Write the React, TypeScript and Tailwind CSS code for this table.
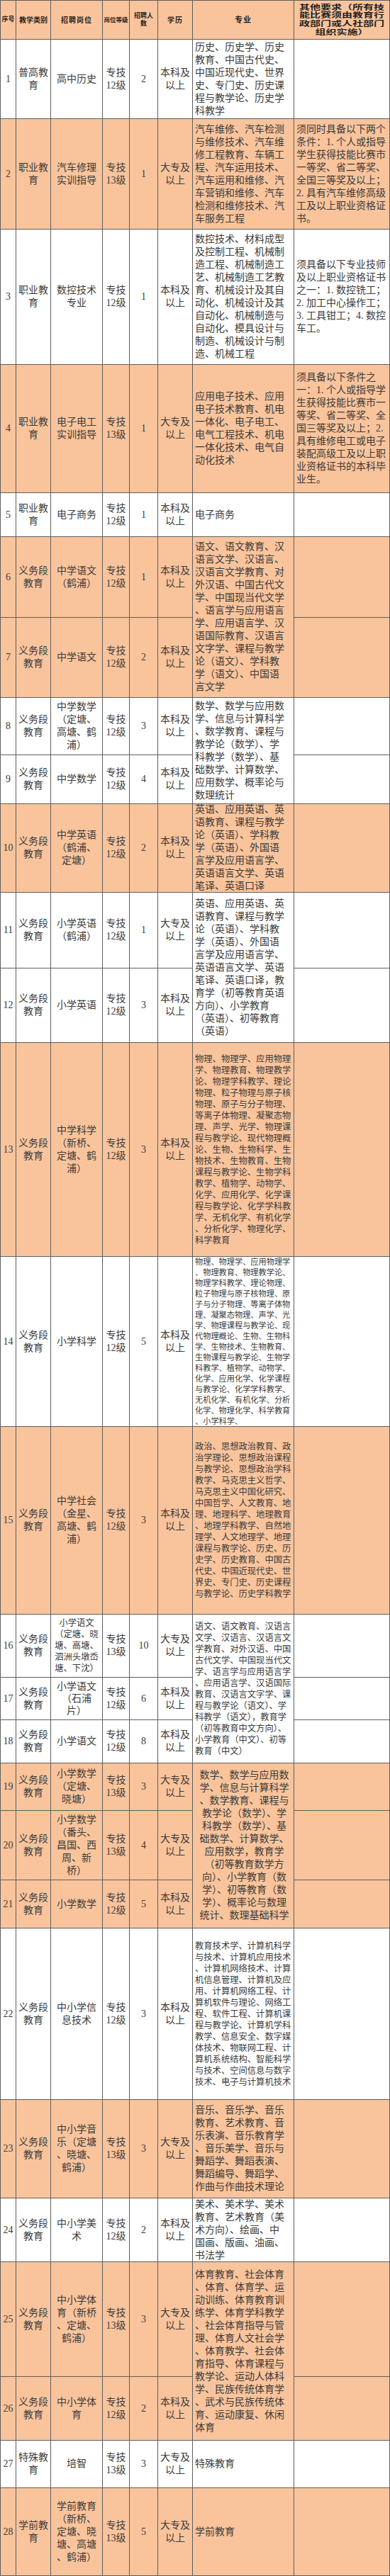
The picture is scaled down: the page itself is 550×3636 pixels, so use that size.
import React from "react";

type Major = { lines: string[]; span?: 2 | 3; size: "lg" | "md" | "sm"; center?: boolean };

type Row = {
  no: string;
  cat: string[];
  pos: string[];
  posSize?: "md" | "tight";
  lvl: string;
  cnt: string;
  edu: string;
  major?: Major;
  other?: string[];
  orange: boolean;
};

const YW = ["义务段", "教育"];

const rows: Row[] = [
  {
    no: "1", cat: ["普高教", "育"], pos: ["高中历史"], lvl: "12级", cnt: "2", edu: "本科及", orange: false,
    major: { size: "lg", lines: ["历史、历史学、历史", "教育、中国古代史、", "中国近现代史、世界", "史、专门史、历史课", "程与教学论、历史学", "科教学"] },
  },
  {
    no: "2", cat: ["职业教", "育"], pos: ["汽车修理", "实训指导"], lvl: "13级", cnt: "1", edu: "大专及", orange: true,
    major: { size: "lg", lines: ["汽车维修、汽车检测", "与维修技术、汽车维", "修工程教育、车辆工", "程、汽车运用技术、", "汽车运用和维修、汽", "车营销和维修、汽车", "检测和维修技术、汽", "车服务工程"] },
    other: ["须同时具备以下两个", "条件：1. 个人或指导", "学生获得技能比赛市", "一等奖、省二等奖、", "全国三等奖及以上；", "2. 具有汽车维修高级", "工及以上职业资格证", "书。"],
  },
  {
    no: "3", cat: ["职业教", "育"], pos: ["数控技术", "专业"], lvl: "12级", cnt: "1", edu: "本科及", orange: false,
    major: { size: "lg", lines: ["数控技术、材料成型", "及控制工程、机械制", "造工程、机械制造工", "艺、机械制造工艺教", "育、机械设计及其自", "动化、机械设计及其", "自动化、机械制造与", "自动化、模具设计与", "制造、机械设计与制", "造、机械工程"] },
    other: ["须具备以下专业技师", "及以上职业资格证书", "之一：1. 数控铣工；", "2. 加工中心操作工；", "3. 工具钳工；4. 数控", "车工。"],
  },
  {
    no: "4", cat: ["职业教", "育"], pos: ["电子电工", "实训指导"], lvl: "13级", cnt: "1", edu: "大专及", orange: true,
    major: { size: "lg", lines: ["应用电子技术、应用", "电子技术教育、机电", "一体化、电子电工、", "电气工程技术、机电", "一体化技术、电气自", "动化技术"] },
    other: ["须具备以下条件之", "一：1. 个人或指导学", "生获得技能比赛市一", "等奖、省二等奖、全", "国三等奖及以上；2.", "具有维修电工或电子", "装配高级工及以上职", "业资格证书的本科毕", "业生。"],
  },
  {
    no: "5", cat: ["职业教", "育"], pos: ["电子商务"], lvl: "12级", cnt: "1", edu: "本科及", orange: false,
    major: { size: "lg", lines: ["电子商务"] },
  },
  {
    no: "6", cat: YW, pos: ["中学语文", "（鹤浦）"], lvl: "12级", cnt: "1", edu: "本科及", orange: true,
    major: { size: "lg", span: 2, lines: ["语文、语文教育、汉", "语言文学、汉语言、", "汉语言文学教育、对", "外汉语、中国古代文", "学、中国现当代文学", "、语言学与应用语言", "学、应用语言学、汉", "语国际教育、汉语言", "文字学、课程与教学", "论（语文）、学科教", "学（语文）、中国语", "言文学"] },
  },
  { no: "7", cat: YW, pos: ["中学语文"], lvl: "12级", cnt: "2", edu: "本科及", orange: true },
  {
    no: "8", cat: YW, pos: ["中学数学", "（定塘、", "高塘、鹤", "浦）"], lvl: "12级", cnt: "3", edu: "本科及", orange: false,
    major: { size: "lg", span: 2, lines: ["数学、数学与应用数", "学、信息与计算科学", "、数学教育、课程与", "教学论（数学）、学", "科教学（数学）、基", "础数学、计算数学、", "应用数学、概率论与", "数理统计"] },
  },
  { no: "9", cat: YW, pos: ["中学数学"], lvl: "12级", cnt: "4", edu: "本科及", orange: false },
  {
    no: "10", cat: YW, pos: ["中学英语", "（鹤浦、", "定塘）"], lvl: "12级", cnt: "2", edu: "本科及", orange: true,
    major: { size: "lg", lines: ["英语、应用英语、英", "语教育、课程与教学", "论（英语）、学科教", "学（英语）、外国语", "言学及应用语言学、", "英语语言文学、英语", "笔译、英语口译"] },
  },
  {
    no: "11", cat: YW, pos: ["小学英语", "（鹤浦）"], lvl: "12级", cnt: "1", edu: "大专及", orange: false,
    major: { size: "lg", span: 2, lines: ["英语、应用英语、英", "语教育、课程与教学", "论（英语）、学科教", "学（英语）、外国语", "言学及应用语言学、", "英语语言文学、英语", "笔译、英语口译，教", "育学（初等教育英语", "方向）、小学教育", "（英语）、初等教育", "（英语）"] },
  },
  { no: "12", cat: YW, pos: ["小学英语"], lvl: "12级", cnt: "3", edu: "本科及", orange: false },
  {
    no: "13", cat: YW, pos: ["中学科学", "（新桥、", "定塘、鹤", "浦）"], lvl: "12级", cnt: "3", edu: "本科及", orange: true,
    major: { size: "md", lines: ["物理、物理学、应用物理", "学、物理教育、物理教学", "论、物理学科教学、理论", "物理、粒子物理与原子核", "物理、原子与分子物理、", "等离子体物理、凝聚态物", "理、声学、光学、物理课", "程与教学论、现代物理概", "论、生物、生物科学、生", "物技术、生物教育、生物", "课程与教学论、生物学科", "教学、植物学、动物学、", "化学、应用化学、化学课", "程与教学论、化学学科教", "学、无机化学、有机化学", "、分析化学、物理化学、", "科学教育"] },
  },
  {
    no: "14", cat: YW, pos: ["小学科学"], lvl: "12级", cnt: "5", edu: "本科及", orange: false,
    major: { size: "sm", lines: ["物理、物理学、应用物理学", "、物理教育、物理教学论、", "物理学科教学、理论物理、", "粒子物理与原子核物理、原", "子与分子物理、等离子体物", "理、凝聚态物理、声学、光", "学、物理课程与教学论、现", "代物理概论、生物、生物科", "学、生物技术、生物教育、", "生物课程与教学论、生物学", "科教学、植物学、动物学、", "化学、应用化学、化学课程", "与教学论、化学学科教学、", "无机化学、有机化学、分析", "化学、物理化学、科学教育", "、小学科学、"] },
  },
  {
    no: "15", cat: YW, pos: ["中学社会", "（金星、", "高塘、鹤", "浦）"], lvl: "12级", cnt: "3", edu: "本科及", orange: true,
    major: { size: "md", lines: ["政治、思想政治教育、政", "治学理论、思想政治课程", "与教学论、思想政治学科", "教学、马克思主义哲学、", "马克思主义中国化研究、", "中国哲学、人文教育、地", "理、地理科学、地理教育", "、地理学科教学、自然地", "理学、人文地理学、地理", "课程与教学论、历史、历", "史学、历史教育、中国古", "代史、中国近现代史、世", "界史、专门史、历史课程", "与教学论、历史学科教学"] },
  },
  {
    no: "16", cat: YW, pos: ["小学语文", "（定塘、晓", "塘、高塘、", "泗洲头墩岙", "塘、下沈）"], posSize: "md", lvl: "13级", cnt: "10", edu: "大专及", orange: false,
    major: { size: "md", span: 3, lines: ["语文、语文教育、汉语言", "文学、汉语言、汉语言文", "学教育、对外汉语、中国", "古代文学、中国现当代文", "学、语言学与应用语言学", "、应用语言学、汉语国际", "教育、汉语言文字学、课", "程与教学论（语文）、学", "科教学（语文），教育学", "（初等教育中文方向）、", "小学教育（中文）、初等", "教育（中文）"] },
  },
  { no: "17", cat: YW, pos: ["小学语文", "（石浦", "片）"], posSize: "tight", lvl: "12级", cnt: "6", edu: "本科及", orange: false },
  { no: "18", cat: YW, pos: ["小学语文"], lvl: "12级", cnt: "8", edu: "本科及", orange: false },
  {
    no: "19", cat: YW, pos: ["小学数学", "（定塘、", "晓塘）"], lvl: "13级", cnt: "3", edu: "大专及", orange: true,
    major: { size: "lg", span: 3, center: true, lines: ["数学、数学与应用数", "学、信息与计算科学", "、数学教育、课程与", "教学论（数学）、学", "科教学（数学）、基", "础数学、计算数学、", "应用数学，教育学", "（初等教育数学方", "向）、小学教育（数", "学）、初等教育（数", "学）、概率论与数理", "统计、数理基础科学"] },
  },
  { no: "20", cat: YW, pos: ["小学数学", "（番头、", "昌国、西", "周、新", "桥）"], lvl: "13级", cnt: "4", edu: "大专及", orange: true },
  { no: "21", cat: YW, pos: ["小学数学"], lvl: "12级", cnt: "5", edu: "本科及", orange: true },
  {
    no: "22", cat: YW, pos: ["中小学信", "息技术"], lvl: "12级", cnt: "3", edu: "本科及", orange: false,
    major: { size: "md", lines: ["教育技术学、计算机科学", "与技术、计算机应用技术", "、计算机网络技术、计算", "机信息管理、计算机及应", "用、计算机网络工程、计", "算机软件与理论、网络工", "程、软件工程、计算机课", "程与教学论、计算机学科", "教学、信息安全、数字媒", "体技术、物联网工程、计", "算机系统结构、智能科学", "与技术、空间信息与数字", "技术、电子与计算机技术"] },
  },
  {
    no: "23", cat: YW, pos: ["中小学音", "乐（定塘", "、晓塘、", "鹤浦）"], lvl: "13级", cnt: "3", edu: "大专及", orange: true,
    major: { size: "lg", lines: ["音乐、音乐学、音乐", "教育、艺术教育、音", "乐表演、音乐教育学", "、音乐美学、音乐与", "舞蹈学、舞蹈表演、", "舞蹈编导、舞蹈学、", "作曲与作曲技术理论"] },
  },
  {
    no: "24", cat: YW, pos: ["中小学美", "术"], lvl: "12级", cnt: "2", edu: "本科及", orange: false,
    major: { size: "lg", lines: ["美术、美术学、美术", "教育、艺术教育（美", "术方向）、绘画、中", "国画、版画、油画、", "书法学"] },
  },
  {
    no: "25", cat: YW, pos: ["中小学体", "育（新桥", "、定塘、", "鹤浦）"], lvl: "13级", cnt: "3", edu: "大专及", orange: true,
    major: { size: "lg", span: 2, lines: ["体育教育、社会体育", "、体育、体育学、运", "动训练、体育教育训", "练学、体育学科教学", "、社会体育指导与管", "理、体育人文社会学", "、体育教学、社会体", "育指导、体育课程与", "教学论、运动人体科", "学、民族传统体育学", "、武术与民族传统体", "育、运动康复、休闲", "体育"] },
  },
  { no: "26", cat: YW, pos: ["中小学体", "育"], lvl: "12级", cnt: "2", edu: "本科及", orange: true },
  {
    no: "27", cat: ["特殊教", "育"], pos: ["培智"], lvl: "13级", cnt: "3", edu: "大专及", orange: false,
    major: { size: "lg", lines: ["特殊教育"] },
  },
  {
    no: "28", cat: ["学前教", "育"], pos: ["学前教育", "（新桥、", "定塘、晓", "塘、高塘", "、鹤浦）"], lvl: "13级", cnt: "5", edu: "大专及", orange: true,
    major: { size: "lg", lines: ["学前教育"] },
  },
];

const headers = [
  { lines: ["序号"], cls: "text-[9px]" },
  { lines: ["教学类别"], cls: "text-[10px]" },
  { lines: ["招聘岗位"], cls: "text-[10px] tracking-[1px]" },
  { lines: ["岗位等级"], cls: "text-[8.5px]" },
  { lines: ["招聘人", "数"], cls: "text-[9px] leading-[11px]" },
  { lines: ["学历"], cls: "text-[10px] tracking-[1px]" },
  { lines: ["专业"], cls: "text-[11px] tracking-[1px]" },
  { lines: ["其他要求（所有技", "能比赛须由教育行", "政部门或人社部门", "组织实施）"], cls: "text-[10px] leading-[11.7px] scale-x-[1.5]" },
];

const edge = "border-r border-b border-[#5e5e5e]";

const majorSize = {
  lg: "text-[14px] leading-[18px]",
  md: "text-[12.3px] leading-[16px]",
  sm: "text-[11.2px] leading-[15px]",
};

function Lines({ lines }: { lines: string[] }) {
  return (
    <>
      {lines.map((l, i) => (
        <div key={i} className="whitespace-nowrap">{l}</div>
      ))}
    </>
  );
}

function Mid({ lines, bg, extra = "text-[14px] leading-[18px]" }: { lines: string[]; bg: string; extra?: string }) {
  return (
    <div className={`${edge} ${bg} flex flex-col items-center justify-center text-center ${extra}`}>
      <Lines lines={lines} />
    </div>
  );
}

export default function App() {
  return (
    <div className="w-[550px] bg-white font-['Liberation_Serif','Noto_Sans_CJK_SC',serif] text-[#3b3b3b]">
      <div className="grid grid-cols-[22px_49px_73px_38px_40px_49px_143px_135px] grid-rows-[55px_112px_156px_191px_181px_62px_114px_113px_81px_69px_125px_107px_105px_302px_240px_265px_89px_60px_61px_67px_98px_68px_242px_139px_90px_162px_90px_67px_124px] border-t border-l border-[#5e5e5e]">
        {/* 表头 */}
        {headers.map((h, i) => (
          <div key={i} className={`${edge} bg-[#f9c49c] flex items-center justify-center text-center font-bold text-[#1e1e1e]`}>
            <div className={`flex flex-col items-center ${h.cls}`}>
              <Lines lines={h.lines} />
            </div>
          </div>
        ))}

        {rows.map((r) => {
          const bg = r.orange ? "bg-[#f9c49c]" : "bg-white";
          const posCls =
            r.posSize === "md"
              ? "text-[12.3px] leading-[16px]"
              : r.posSize === "tight"
              ? "text-[14px] leading-[17px]"
              : "text-[14px] leading-[18px]";
          return (
            <React.Fragment key={r.no}>
              <Mid lines={[r.no]} bg={bg} />
              <Mid lines={r.cat} bg={bg} />
              <Mid lines={r.pos} bg={bg} extra={posCls} />
              <Mid lines={["专技", r.lvl]} bg={bg} />
              <Mid lines={[r.cnt]} bg={bg} />
              <Mid lines={[r.edu, "以上"]} bg={bg} />
              {r.major && (
                <div
                  className={`${edge} ${bg} ${r.major.span === 3 ? "row-span-3" : r.major.span === 2 ? "row-span-2" : ""} flex flex-col justify-center pl-[3px] ${majorSize[r.major.size]} ${r.major.center ? "items-center" : "items-start"}`}
                >
                  <Lines lines={r.major.lines} />
                </div>
              )}
              <div className={`${edge} ${bg} flex flex-col justify-center pl-[3px] text-[14px] leading-[18px]`}>
                {r.other && <Lines lines={r.other} />}
              </div>
            </React.Fragment>
          );
        })}
      </div>
    </div>
  );
}
